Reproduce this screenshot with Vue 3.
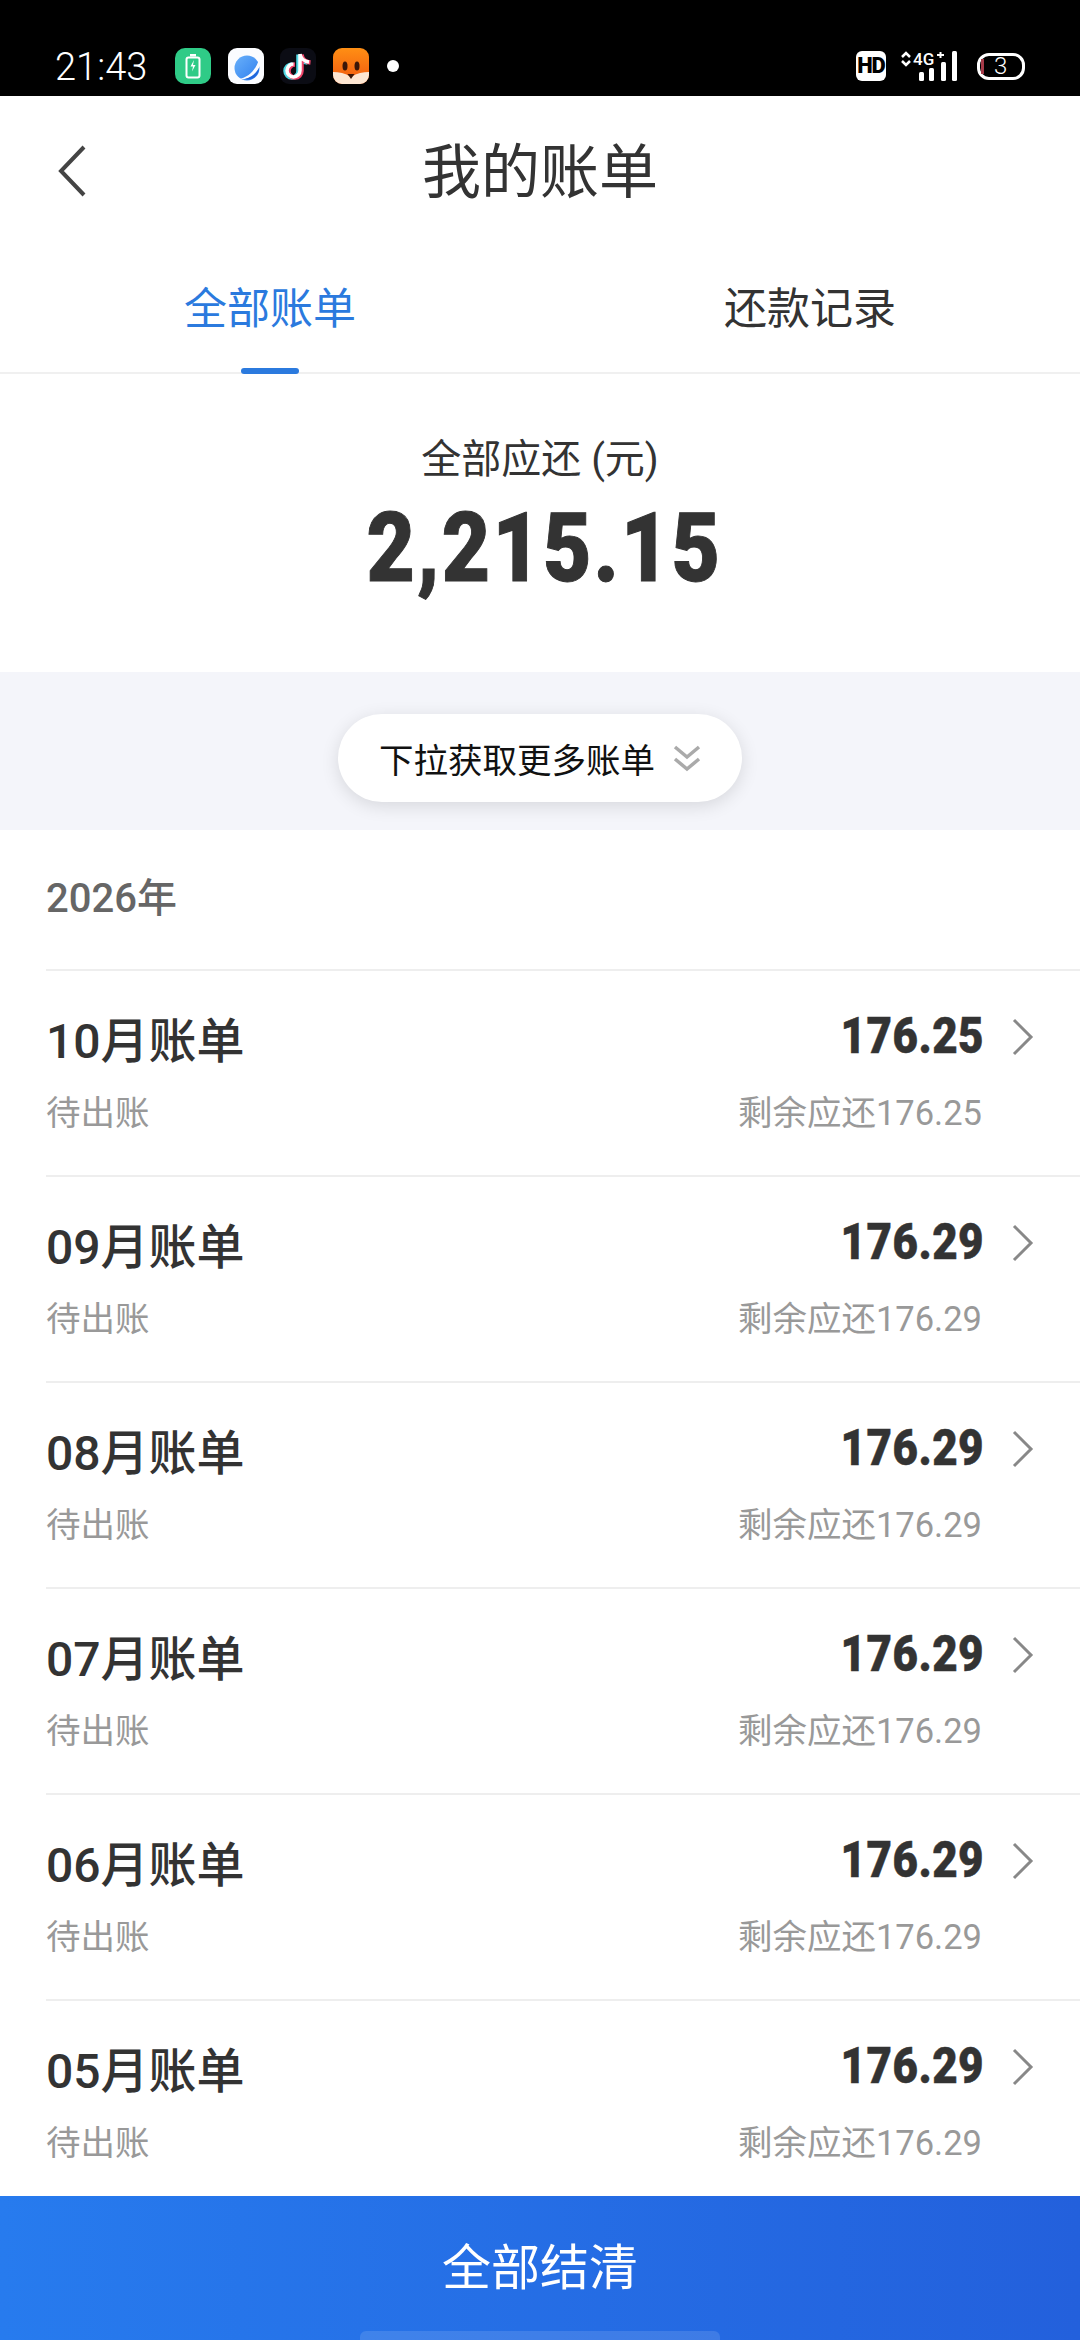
<script setup>
const bills = [
  { month: "10月账单", amount: "176.25" },
  { month: "09月账单", amount: "176.29" },
  { month: "08月账单", amount: "176.29" },
  { month: "07月账单", amount: "176.29" },
  { month: "06月账单", amount: "176.29" },
  { month: "05月账单", amount: "176.29" },
];
</script>

<template>
  <div class="page">
    <div class="statusbar">
      <span class="time">21:43</span>
      <div class="apps">
        <svg class="app" viewBox="0 0 36 36">
          <rect width="36" height="36" rx="10" fill="#2fcb87" />
          <rect x="11.500" y="9.500" width="13" height="20" rx="2" fill="none" stroke="#fff" stroke-width="2" />
          <rect x="15" y="6" width="6" height="2.500" fill="#fff" />
          <path d="M19 12l-3.500 6.500h2.500l-1 5 3.500-6.500h-2.500z" fill="#fff" />
        </svg>
        <svg class="app" viewBox="0 0 36 36">
          <defs>
            <linearGradient id="planet" x1="0" y1="0" x2="1" y2="1">
              <stop offset="0" stop-color="#69b0fa" />
              <stop offset="1" stop-color="#2f7fee" />
            </linearGradient>
          </defs>
          <rect width="36" height="36" rx="9" fill="#fbfcff" />
          <circle cx="19" cy="20" r="12.500" fill="url(#planet)" />
          <path d="M11 31c8-1 17-8 20-20l3-2c0 12-11 24-23 22z" fill="#fbfcff" />
          <path d="M17 31c6-1 11-5 14-11 0 7-6 13-14 11z" fill="#1f66dc" />
        </svg>
        <svg class="app" viewBox="0 0 36 36">
          <rect width="36" height="36" rx="9" fill="#0b0c14" />
          <g fill="none" stroke-width="4.500">
            <path d="M20 6v16.500a6.500 6.500 0 1 1-6.500-6.500M20 6c.5 4 4 7.500 9 8" stroke="#4fd8e4" transform="translate(-1.500 .5)" />
            <path d="M20 6v16.500a6.500 6.500 0 1 1-6.500-6.500M20 6c.5 4 4 7.500 9 8" stroke="#f0446a" transform="translate(1.500 .5)" />
            <path d="M20 6v16.500a6.500 6.500 0 1 1-6.500-6.500M20 6c.5 4 4 7.500 9 8" stroke="#fff" stroke-width="3.500" />
          </g>
        </svg>
        <svg class="app" viewBox="0 0 36 36">
          <defs>
            <linearGradient id="fox" x1="0" y1="0" x2="0" y2="1">
              <stop offset="0" stop-color="#ff8f14" />
              <stop offset="1" stop-color="#f0560f" />
            </linearGradient>
          </defs>
          <rect width="36" height="36" rx="9" fill="url(#fox)" />
          <path d="M0 24c6 0 12 1 18 5 6-4 12-5 18-5v3a9 9 0 0 1-9 9H9a9 9 0 0 1-9-9z" fill="#fde6d2" />
          <ellipse cx="12" cy="18" rx="2.500" ry="4.500" fill="#3a1608" />
          <ellipse cx="24" cy="18" rx="2.500" ry="4.500" fill="#3a1608" />
          <path d="M14.500 26h7L18 31z" fill="#3a1608" />
        </svg>
        <span class="dot"></span>
      </div>
      <div class="sys">
        <span class="hd">HD</span>
        <svg class="signal" viewBox="0 0 60 32">
          <path d="M2 7l4-4 4 4M2 11l4 4 4-4" fill="none" stroke="#fff" stroke-width="2.500" />
          <text x="13" y="15" class="net">4G</text>
          <path d="M37 5h7M40.500 2v6" stroke="#fff" stroke-width="2" />
          <rect x="19" y="22" width="5" height="9" rx="1.500" fill="#fff" />
          <rect x="29" y="18" width="5" height="13" rx="1.500" fill="#fff" />
          <rect x="41" y="12" width="5" height="19" rx="1.500" fill="#fff" />
          <rect x="52" y="1" width="5" height="30" rx="1.500" fill="#fff" />
        </svg>
        <div class="battery">
          <span class="level"></span>
          <span class="pct">3</span>
        </div>
      </div>
    </div>

    <div class="nav">
      <svg class="back" viewBox="0 0 28 52">
        <path d="M26 2L3 26l23 24" fill="none" stroke="#444" stroke-width="4" />
      </svg>
      <span class="title">我的账单</span>
    </div>

    <div class="tabs">
      <div class="tab active">全部账单<i class="bar"></i></div>
      <div class="tab">还款记录</div>
    </div>

    <div class="summary">
      <div class="sum-label">全部应还 (元)</div>
      <div class="sum-value">2,215.15</div>
    </div>

    <div class="pull">
      <div class="pill">
        <span>下拉获取更多账单</span>
        <svg class="chev" viewBox="0 0 28 28">
          <path d="M2 3l12 10L26 3M2 15l12 10 12-10" fill="none" stroke="#aaa" stroke-width="3.500" />
        </svg>
      </div>
    </div>

    <div class="list">
      <div class="year">2026年</div>
      <div v-for="b in bills" :key="b.month" class="row">
        <div class="row-line">
          <span class="month">{{ b.month }}</span>
          <span class="amount">{{ b.amount }}</span>
          <svg class="arrow" viewBox="0 0 22 38">
            <path d="M2 2l17 17L2 36" fill="none" stroke="#888" stroke-width="3" />
          </svg>
        </div>
        <div class="row-sub">
          <span>待出账</span>
          <span class="left">剩余应还{{ b.amount }}</span>
        </div>
      </div>
    </div>

    <div class="settle">
      全部结清
      <i class="home"></i>
    </div>
  </div>
</template>

<style>
html,
body {
  margin: 0;
  background: #fff;
}
</style>

<style scoped>
.page {
  width: 1080px;
  height: 2340px;
  display: flex;
  flex-direction: column;
  overflow: hidden;
  background: #fff;
  color: #333;
  font-family: Roboto, "Noto Sans CJK SC", sans-serif;
}
.statusbar {
  height: 96px;
  flex: none;
  background: #000;
  color: #fff;
  display: flex;
  align-items: flex-start;
  padding: 48px 55px 0 55px;
  box-sizing: border-box;
}
.time {
  font-size: 38px;
  font-weight: 300;
  line-height: 38px;
}
.apps {
  display: flex;
  align-items: center;
  gap: 16.500px;
  margin-left: 28px;
}
.app {
  width: 36px;
  height: 36px;
  display: block;
}
.dot {
  width: 12px;
  height: 12px;
  border-radius: 50%;
  background: #fff;
  margin-left: 2px;
}
.sys {
  margin-left: auto;
  margin-top: 2px;
  display: flex;
  align-items: center;
}
.hd {
  width: 30px;
  height: 30px;
  border-radius: 6px;
  background: #fff;
  color: #000;
  font-size: 22px;
  font-weight: 900;
  line-height: 30px;
  text-align: center;
  letter-spacing: -1px;
}
.signal {
  width: 60px;
  height: 32px;
  margin-left: 14px;
}
.net {
  font-size: 17px;
  font-weight: 500;
  fill: #fff;
}
.battery {
  width: 48px;
  height: 27px;
  margin-left: 17px;
  box-sizing: border-box;
  border: 3px solid #fff;
  border-radius: 12px;
  display: flex;
  align-items: center;
  position: relative;
}
.level {
  width: 3px;
  height: 15px;
  margin-left: 1px;
  background: #a53a48;
}
.pct {
  font-size: 24px;
  font-weight: 300;
  line-height: 21px;
  margin-left: 10px;
}
.nav {
  height: 152px;
  flex: none;
  display: flex;
  align-items: center;
  justify-content: center;
  position: relative;
}
.back {
  position: absolute;
  left: 58px;
  top: 49px;
  width: 28px;
  height: 52px;
}
.title {
  font-size: 59px;
  line-height: 70px;
  margin-top: 1px;
}
.tabs {
  height: 124px;
  flex: none;
  display: flex;
  border-bottom: 2px solid #f0f0f0;
  box-sizing: content-box;
}
.tab {
  flex: 1;
  text-align: center;
  font-size: 43px;
  line-height: 122px;
  position: relative;
}
.tab.active {
  color: #2b7ade;
}
.bar {
  position: absolute;
  left: 241px;
  bottom: -2px;
  width: 58px;
  height: 6px;
  border-radius: 3px;
  background: #2b7ade;
}
.summary {
  height: 298px;
  flex: none;
  text-align: center;
  box-sizing: border-box;
  padding-top: 60px;
}
.sum-label {
  font-size: 40px;
  line-height: 52px;
}
.sum-value {
  font-size: 96px;
  font-weight: 900;
  line-height: 112px;
  margin-top: 6px;
  padding-left: 10px;
  letter-spacing: 2.500px;
  transform: scaleX(0.87);
  -webkit-text-stroke: 1px #333;
}
.pull {
  height: 158px;
  flex: none;
  background: #f4f5fa;
  display: flex;
  justify-content: center;
  align-items: flex-start;
  padding-top: 42px;
  box-sizing: border-box;
}
.pill {
  width: 404px;
  height: 88px;
  border-radius: 44px;
  background: #fff;
  box-shadow: 0 4px 18px rgba(0, 0, 0, 0.12);
  display: flex;
  align-items: center;
  box-sizing: border-box;
  padding-left: 41px;
  font-size: 34.500px;
  color: #111;
}
.chev {
  width: 28px;
  height: 28px;
  margin-left: 18px;
}
.list {
  flex: 1;
  min-height: 0;
  overflow: hidden;
}
.year {
  height: 139px;
  box-sizing: border-box;
  padding: 44px 0 0 46px;
  font-size: 40px;
  font-weight: 500;
  line-height: 50px;
  color: #666;
}
.row {
  height: 206px;
  margin-left: 46px;
  box-sizing: border-box;
  border-top: 2px solid #eee;
  padding: 33px 46px 0 0;
}
.row-line {
  display: flex;
  align-items: center;
  height: 66px;
}
.month {
  font-size: 48px;
  font-weight: 500;
  margin-right: auto;
}
.amount {
  font-size: 50px;
  font-weight: 900;
  letter-spacing: 0.500px;
  margin-top: -3px;
  transform: scaleX(0.88);
  transform-origin: right center;
  -webkit-text-stroke: 0.500px #333;
}
.arrow {
  width: 22px;
  height: 38px;
  margin-left: 28px;
}
.row-sub {
  display: flex;
  justify-content: space-between;
  font-size: 34.500px;
  line-height: 44px;
  color: #999;
  margin-top: 21px;
  padding-right: 52px;
}
.settle {
  height: 144px;
  flex: none;
  position: relative;
  background: linear-gradient(90deg, #277bee, #2360dc);
  color: #fff;
  font-size: 49px;
  line-height: 146px;
  text-align: center;
}
.home {
  position: absolute;
  left: 360px;
  bottom: 0;
  width: 360px;
  height: 9px;
  border-radius: 6px 6px 0 0;
  background: rgba(255, 255, 255, 0.12);
}
</style>
